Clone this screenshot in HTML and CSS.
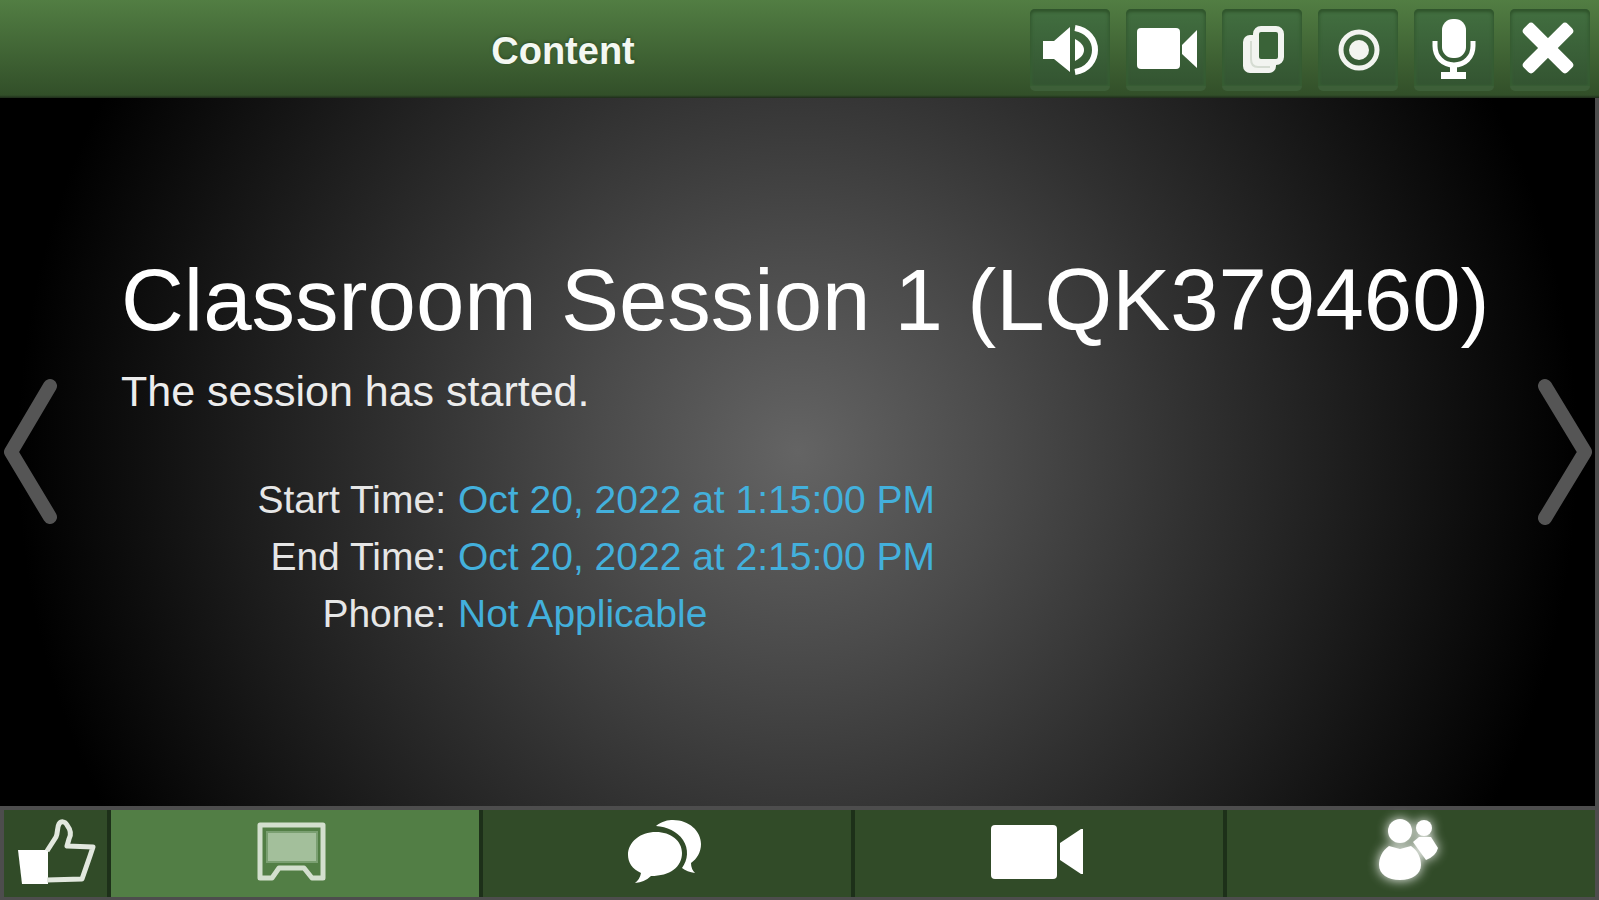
FILE: index.html
```html
<!DOCTYPE html>
<html lang="en">
<head>
<meta charset="utf-8">
<title>Classroom Session 1</title>
<link rel="stylesheet" href="styles.css">
</head>
<body>
<div class="app">
  <header class="topbar">
    <h2 class="topbar-title">Content</h2>
    <div class="tools">
      <button class="tool" type="button" aria-label="Audio">
        <svg viewBox="0 0 80 82"><path d="M13 32H24L40 18V63L24 50H13Z"/><path d="M45 30C51 33 54 37 54 41S51 49 45 52Z"/><path class="line" stroke-width="6" d="M45 19C58 21 65 31 65 41S58 61 45 63"/></svg>
      </button>
      <button class="tool" type="button" aria-label="Camera">
        <svg viewBox="0 0 80 82"><rect x="11" y="19" width="43" height="41" rx="4"/><path d="M56 36L71 21V59L56 45Z"/></svg>
      </button>
      <button class="tool" type="button" aria-label="Copy">
        <svg class="soft" viewBox="0 0 80 82"><rect x="21" y="26" width="33" height="38" rx="7"/><path class="crease" d="M29 32V50Q29 58 36 58H48"/><rect class="pane" x="34" y="20" width="25" height="33" rx="5"/></svg>
      </button>
      <button class="tool" type="button" aria-label="Record">
        <svg class="soft" viewBox="0 0 80 82"><circle cx="41" cy="41" r="10"/><circle class="line" stroke-width="5" cx="41" cy="41" r="18"/></svg>
      </button>
      <button class="tool" type="button" aria-label="Microphone">
        <svg viewBox="0 0 80 82"><rect x="28" y="10" width="24" height="39" rx="11"/><path class="line" stroke-width="5" d="M21 32V37C21 48 29 56 40 56S59 48 59 37V32"/><path d="M36 56H43V63H52V70H27V63H36Z"/></svg>
      </button>
      <button class="tool" type="button" aria-label="Close">
        <svg viewBox="0 0 80 82"><g transform="translate(38 39) rotate(45)"><rect x="-31" y="-7" width="62" height="14" rx="4"/><rect x="-7" y="-31" width="14" height="62" rx="4"/></g></svg>
      </button>
    </div>
  </header>

  <main class="stage">
    <button class="arrow" type="button" aria-label="Previous">
      <svg viewBox="0 0 60 148"><path d="M50 8L11 74L50 139"/></svg>
    </button>
    <section class="session">
      <h1 class="session-title">Classroom Session 1 (LQK379460)</h1>
      <p class="session-status">The session has started.</p>
      <dl class="details">
        <dt>Start Time:</dt><dd>Oct 20, 2022 at 1:15:00 PM</dd>
        <dt>End Time:</dt><dd>Oct 20, 2022 at 2:15:00 PM</dd>
        <dt>Phone:</dt><dd>Not Applicable</dd>
      </dl>
    </section>
    <button class="arrow" type="button" aria-label="Next">
      <svg viewBox="0 0 60 148"><path d="M10 8L50 74L10 140"/></svg>
    </button>
  </main>

  <nav class="tabs">
    <button class="tab tab-small" type="button" aria-label="Feedback">
      <svg width="80" height="68" viewBox="15 27 80 68"><path d="M17 59H47V93H21Z"/><path class="line thumb" stroke-width="5" d="M46 60L55 46C57 42 56 36 58 33C60 30 64 30 66 34C69 38 71 43 68 48L66 55L92 56L89 65L81 88L46 89"/></svg>
    </button>
    <button class="tab tab-active" type="button" aria-label="Content">
      <svg width="72" height="62" viewBox="256 31 72 62"><rect class="screen" x="266" y="42" width="50" height="30"/><path class="line frame" stroke-width="5" d="M259 35H322V88H311L303 78H278L271 88H259Z"/></svg>
    </button>
    <button class="tab" type="button" aria-label="Chat">
      <svg width="78" height="68" viewBox="46 27 78 68"><path d="M76 35C82 30 88 29 93 29C109 29 121 40 121 53C121 61 117 68 111 72Q111 78 115 82Q107 81 102 77C108 69 109 58 103 49C97 40 87 36 76 35Z"/><path d="M76 41C91 41 102 50 102 62C102 76 90 85 71 85Q65 91 55 92Q60 88 61 82C52 78 48 71 48 64C48 51 60 41 76 41Z"/></svg>
    </button>
    <button class="tab" type="button" aria-label="Video">
      <svg width="92" height="56" viewBox="412 33 92 56"><rect x="412" y="34" width="66" height="54" rx="4"/><path d="M481 52L502 38H504V83H502L481 69Z"/></svg>
    </button>
    <button class="tab" type="button" aria-label="Participants">
      <svg class="glow" width="60" height="68" viewBox="181 26 60 68"><circle cx="202" cy="39" r="12"/><path d="M191 54L202 57L213 54C220 59 223 66 223 73C223 82 214 88 202 88S181 82 181 73C181 66 184 59 191 54Z"/><circle cx="226" cy="36" r="8"/><path d="M215 50L221 45H233L240 56Q238 64 228 68Z"/></svg>
    </button>
  </nav>
</div>
</body>
</html>
```
FILE: styles.css
```css
* { box-sizing: border-box; }

body {
  margin: 0;
  background: #000;
  font-family: "Liberation Sans", Arial, Helvetica, sans-serif;
}

button {
  margin: 0;
  padding: 0;
  border: 0;
  background: none;
}

svg { display: block; fill: #fff; }

.line { fill: none; stroke: #fff; }

.app {
  min-height: 100vh;
  display: flex;
  flex-direction: column;
}

.topbar {
  display: flex;
  align-items: flex-start;
  height: 98px;
  padding: 9px 9px 0 96px;
  background: linear-gradient(#527e43, #324f29 97%, #1f2c1b);
}

.topbar-title {
  flex: 1;
  margin: 0;
  color: #f4f8f2;
  font-size: 38px;
  line-height: 84px;
  text-align: center;
  text-shadow: 0 -1px 3px #2c4a25;
}

.tools { display: flex; gap: 16px; }

.tool {
  width: 80px;
  height: 82px;
  border-radius: 5px;
  border-bottom: 5px solid #3d5f38;
  background: linear-gradient(#426f40, #335431);
  box-shadow: inset 0 3px 3px #30552c, inset 2px 0 3px #3a6236, inset -2px 0 3px #3a6236;
}

.tool svg { width: 80px; height: 82px; }

.soft { fill: #f2f4f0; }
.soft .line { stroke: #f2f4f0; }
.pane { fill: #3a6338; stroke: #f2f4f0; stroke-width: 6; }
.crease { fill: none; stroke: #d5dcd2; stroke-width: 2; }

.stage {
  flex: 1;
  display: flex;
  align-items: center;
  border-right: 4px solid #4d4d4d;
  background: radial-gradient(circle at 50% 50%, #646464 0, #4b4b4b 200px, #303030 400px, #141414 620px, #000 780px);
}

.arrow { width: 60px; height: 148px; }

.arrow svg {
  width: 60px;
  height: 148px;
  fill: none;
  stroke: #555;
  stroke-width: 14;
  stroke-linecap: round;
  stroke-linejoin: round;
}

.session {
  flex: 1;
  min-width: 0;
  padding: 0 0 12px 61px;
  color: #fff;
  white-space: nowrap;
}

.session-title {
  margin: 0 0 16px;
  font-size: 87px;
  font-weight: 400;
  line-height: 100px;
}

.session-status {
  margin: 0 0 55px;
  color: #ececec;
  font-size: 43px;
  line-height: 50px;
}

.details {
  display: grid;
  grid-template-columns: 325px 1fr;
  column-gap: 12px;
  margin: 0;
  font-size: 39px;
  line-height: 57px;
}

.details dt { color: #e6e6e6; text-align: right; }
.details dd { margin: 0; color: #43b0dc; }

.tabs {
  display: flex;
  height: 94px;
  border: 4px solid #4d4d4d;
  border-bottom-width: 3px;
}

.tab {
  flex: 1;
  display: flex;
  align-items: center;
  justify-content: center;
  padding: 0 4px 4px 0;
  border-right: 4px solid #1d3019;
  background: #314b28;
}

.tab:last-child { border-right: 0; }

.tab-small { flex: 0 0 107px; padding-right: 0; }
.tab-active { background: #527e45; }

.thumb { stroke: #e2e8df; stroke-linejoin: round; }
.frame { stroke: #d3dfce; stroke-linejoin: round; }
.screen { fill: #a3bf9b; stroke: #7a9f71; stroke-width: 2; }

.glow { overflow: visible; filter: drop-shadow(0 0 6px #fff); }
```
